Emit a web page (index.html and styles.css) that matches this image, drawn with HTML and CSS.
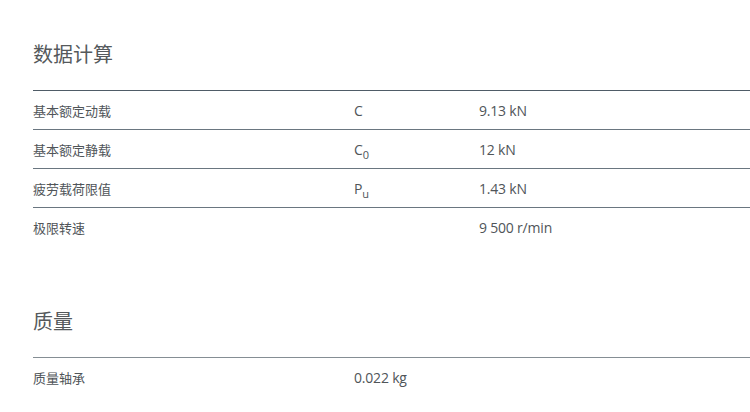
FILE: index.html
```html
<!DOCTYPE html>
<html lang="zh-CN">
<head>
  <meta charset="UTF-8" />
  <title>数据计算</title>
  <link rel="stylesheet" href="styles.css">
</head>
<body>
  <div class="page">
    <section class="section">
      <h2>数据计算</h2>
      <div class="table">
        <div class="row">
          <span class="label">基本额定动载</span>
          <span class="symbol">C</span>
          <span class="value">9.13 kN</span>
        </div>
        <div class="row">
          <span class="label">基本额定静载</span>
          <span class="symbol">C<sub>0</sub></span>
          <span class="value">12 kN</span>
        </div>
        <div class="row">
          <span class="label">疲劳载荷限值</span>
          <span class="symbol">P<sub>u</sub></span>
          <span class="value">1.43 kN</span>
        </div>
        <div class="row">
          <span class="label">极限转速</span>
          <span class="symbol"></span>
          <span class="value">9 500 r/min</span>
        </div>
      </div>
    </section>

    <section class="section">
      <h2>质量</h2>
      <div class="table mass">
        <div class="row">
          <span class="label">质量轴承</span>
          <span class="value">0.022 kg</span>
        </div>
      </div>
    </section>
  </div>
</body>
</html>
```

FILE: styles.css
```css
* { margin: 0; padding: 0; box-sizing: border-box; }

body {
  background: #fff;
  color: #505559;
  font-family: "Open Sans", "Noto Sans CJK SC", sans-serif;
  font-size: 13px;
}

.page {
  padding: 41px 0 0 33px;
}

.section {
  margin-bottom: 62px;
}

.section:last-child {
  margin-bottom: 0;
}

.section h2 {
  font-size: 20px;
  font-weight: normal;
  line-height: 28px;
  color: #55595c;
  margin-bottom: 21px;
}

.row {
  display: grid;
  grid-template-columns: 321px 125px 1fr;
  align-items: center;
  height: 39px;
  border-top: 1px solid #6a7680;
}

.row:first-child {
  border-top-color: #4f5c67;
}

.mass .row {
  grid-template-columns: 321px 1fr;
  border-top-color: #858e94;
}

.label {
  font-size: 13px;
}

.symbol, .value {
  font-size: 14px;
  letter-spacing: -0.2px;
}

.symbol sub {
  font-size: 11px;
  vertical-align: -4px;
  line-height: 0;
}
```
